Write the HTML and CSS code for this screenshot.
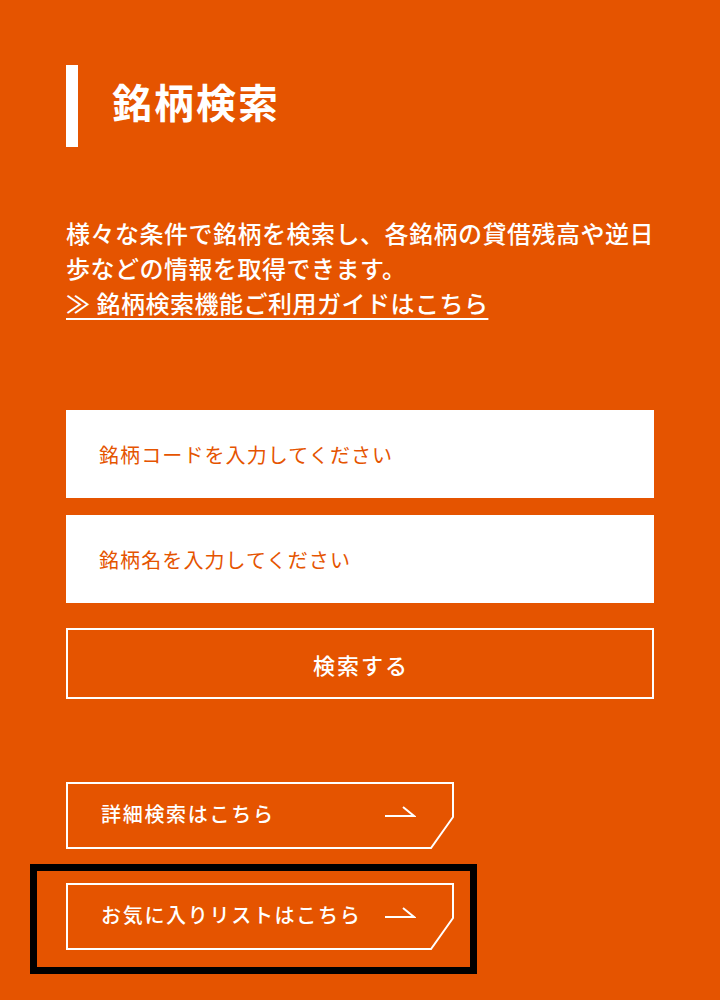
FILE: index.html
```html
<!DOCTYPE html>
<html lang="ja">
<head>
<meta charset="utf-8">
<title>銘柄検索</title>
<link rel="stylesheet" href="styles.css">
</head>
<body>
<main class="page">
  <h1 class="title">銘柄検索</h1>
  <p class="lead">様々な条件で銘柄を検索し、各銘柄の貸借残高や逆日歩などの情報を取得できます。<br><a class="guide" href="#">≫ 銘柄検索機能ご利用ガイドはこちら</a></p>

  <form class="search">
    <input class="field" type="text" placeholder="銘柄コードを入力してください">
    <input class="field" type="text" placeholder="銘柄名を入力してください">
    <button class="submit" type="button">検索する</button>
  </form>

  <nav class="links">
    <a class="link-btn" href="#">
      <svg class="frame" width="388" height="67" viewBox="0 0 388 67"><path d="M1 1 H387 V35 L365 66 H1 Z" fill="none" stroke="#fff" stroke-width="2"/></svg>
      <span class="link-text">詳細検索はこちら</span>
      <svg class="arrow" width="31" height="11" viewBox="0 0 31 11"><path d="M0 10 H29 L18 1" fill="none" stroke="#fff" stroke-width="2"/></svg>
    </a>
    <div class="highlight">
      <a class="link-btn" href="#">
        <svg class="frame" width="388" height="67" viewBox="0 0 388 67"><path d="M1 1 H387 V35 L365 66 H1 Z" fill="none" stroke="#fff" stroke-width="2"/></svg>
        <span class="link-text">お気に入りリストはこちら</span>
        <svg class="arrow" width="31" height="11" viewBox="0 0 31 11"><path d="M0 10 H29 L18 1" fill="none" stroke="#fff" stroke-width="2"/></svg>
      </a>
    </div>
  </nav>
</main>
</body>
</html>
```

FILE: styles.css
```css
html, body {
  margin: 0;
  padding: 0;
  background: #e55400;
}

body {
  font-family: "Noto Sans CJK JP", "Noto Sans", sans-serif;
  color: #fff;
}

.page {
  padding: 65px 66px 27px 66px;
}

.title {
  margin: 0;
  height: 82px;
  box-sizing: border-box;
  border-left: 12px solid #fff;
  padding: 16px 0 0 34px;
  font-size: 40px;
  line-height: 40px;
  font-weight: 700;
  letter-spacing: 2px;
}

.lead {
  margin: 68px 0 0 0;
  font-size: 24px;
  line-height: 35px;
  font-weight: 500;
  letter-spacing: 0.5px;
}

.guide {
  color: #fff;
  text-decoration: underline;
  text-decoration-thickness: 2px;
  text-underline-offset: 5px;
}

.search {
  margin-top: 90px;
  display: flex;
  flex-direction: column;
}

.field {
  display: block;
  width: 100%;
  height: 88px;
  box-sizing: border-box;
  border: none;
  outline: none;
  background: #fff;
  padding: 0 33px;
  margin: 0 0 17px 0;
  font-family: inherit;
  font-size: 20px;
  letter-spacing: 1.1px;
  color: #e55400;
}

.field::placeholder {
  color: #e55400;
  opacity: 1;
}

.submit {
  margin-top: 8px;
  height: 71px;
  width: 100%;
  box-sizing: border-box;
  background: transparent;
  border: 2px solid #fff;
  color: #fff;
  font-family: inherit;
  font-size: 22px;
  font-weight: 500;
  letter-spacing: 2px;
  padding: 0 0 0 2px;
}

.links {
  margin-top: 83px;
  display: flex;
  flex-direction: column;
  align-items: flex-start;
}

.highlight {
  margin: 15px 0 0 -36px;
  padding: 12px 16px 17px 29px;
  border: 7px solid #000;
}

.link-btn {
  position: relative;
  display: flex;
  align-items: center;
  justify-content: space-between;
  width: 388px;
  height: 67px;
  box-sizing: border-box;
  padding: 0 38px 3px 35px;
  color: #fff;
  text-decoration: none;
}

.frame {
  position: absolute;
  left: 0;
  top: 0;
}

.link-text {
  font-size: 20px;
  font-weight: 500;
  letter-spacing: 1.7px;
  line-height: 28px;
}

.arrow {
  display: block;
  margin-top: -6px;
}
```
